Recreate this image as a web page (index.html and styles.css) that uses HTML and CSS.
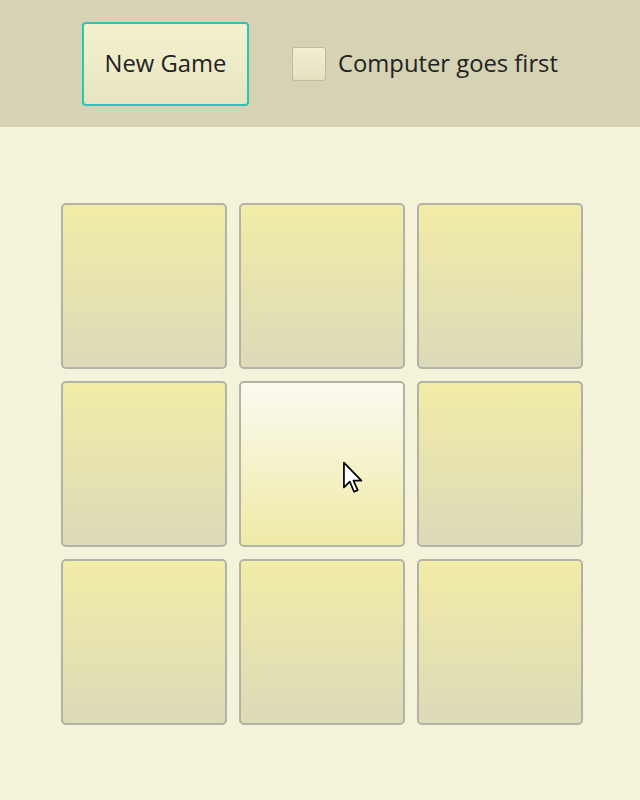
FILE: index.html
```html
<!DOCTYPE html>
<html>
<head>
<meta charset="utf-8">
<link rel="stylesheet" href="styles.css">
</head>
<body>
<div class="toolbar">
  <button class="new-game">New Game</button>
  <label class="check">
    <span class="box"></span>
    <span class="label">Computer goes first</span>
  </label>
</div>
<div class="board-wrap">
  <div class="board">
    <div class="cell"></div>
    <div class="cell"></div>
    <div class="cell"></div>
    <div class="cell"></div>
    <div class="cell hover">
      <svg class="cursor" width="24" height="36" viewBox="0 0 22 34">
        <path d="M1.5 1.5 L1.5 25 L7 19.5 L11 29 L14.5 27.5 L10.5 18.5 L18 18.5 Z" fill="#fff" stroke="#000" stroke-width="1.6" stroke-linejoin="round"/>
      </svg>
    </div>
    <div class="cell"></div>
    <div class="cell"></div>
    <div class="cell"></div>
    <div class="cell"></div>
  </div>
</div>
</body>
</html>
```
FILE: styles.css
```css
html, body {
  margin: 0;
  padding: 0;
}
body {
  width: 640px;
  height: 800px;
  background: #f4f2d8;
  font-family: "Open Sans", "Noto Sans", sans-serif;
  overflow: hidden;
}
.toolbar {
  height: 127px;
  background: #d5d3b3;
  display: flex;
  align-items: center;
  padding-left: 82px;
  box-sizing: border-box;
}
.new-game {
  width: 167px;
  height: 84px;
  box-sizing: border-box;
  border: 2px solid #2ec3b5;
  border-radius: 4px;
  background: linear-gradient(#f3f1cf, #e7e5c1);
  font-family: inherit;
  font-size: 23.8px;
  line-height: 1;
  color: #222;
  padding: 0;
  margin: 0;
}
.check {
  display: flex;
  align-items: center;
  margin-left: 43px;
  gap: 12px;
}
.box {
  width: 34px;
  height: 34px;
  box-sizing: border-box;
  border: 1px solid #bdbba3;
  border-radius: 3px;
  background: linear-gradient(#f0eecf, #e4e2c0);
}
.label {
  font-size: 23.8px;
  line-height: 1;
  color: #222;
}
.board-wrap {
  padding-top: 76px;
  padding-left: 61px;
}
.board {
  display: grid;
  grid-template-columns: repeat(3, 166px);
  grid-template-rows: repeat(3, 166px);
  gap: 12px;
}
.cell {
  box-sizing: border-box;
  border: 2px solid #b3b2a6;
  border-radius: 5px;
  background: linear-gradient(#f1eca6, #dcdab9);
  position: relative;
}
.cell.hover {
  background: linear-gradient(#fbfaf0, #efeaa6);
}
.cursor {
  position: absolute;
  left: 101px;
  top: 78px;
}
```
